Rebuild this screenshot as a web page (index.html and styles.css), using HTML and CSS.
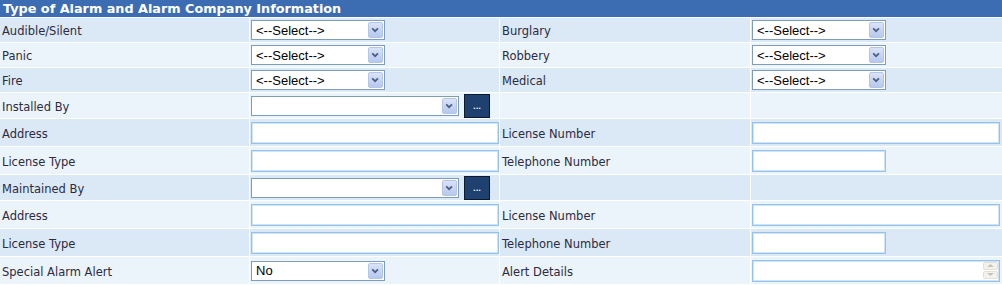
FILE: index.html
```html
<!DOCTYPE html>
<html lang="en">
<head>
  <meta charset="UTF-8">
  <title>Alarm Information</title>
  <link rel="stylesheet" href="styles.css">
</head>
<body>

  <div class="panel">
    <div class="panel-title">Type of Alarm and Alarm Company Information</div>

    <div class="rows">
      <div class="row row-select dark">
        <div class="cell label">Audible/Silent</div>
        <div class="cell"><span class="dd dd-small"><select><option>&lt;--Select--&gt;</option></select><svg class="dd-arrow" width="15" height="17" viewBox="0 0 15 17"><path d="M3.5 6.5 L7 10 L10.5 6.5" fill="none" stroke="#4d6185" stroke-width="2.2"/></svg></span></div>
        <div class="cell label">Burglary</div>
        <div class="cell"><span class="dd dd-small"><select><option>&lt;--Select--&gt;</option></select><svg class="dd-arrow" width="15" height="17" viewBox="0 0 15 17"><path d="M3.5 6.5 L7 10 L10.5 6.5" fill="none" stroke="#4d6185" stroke-width="2.2"/></svg></span></div>
      </div>

      <div class="row row-select light">
        <div class="cell label">Panic</div>
        <div class="cell"><span class="dd dd-small"><select><option>&lt;--Select--&gt;</option></select><svg class="dd-arrow" width="15" height="17" viewBox="0 0 15 17"><path d="M3.5 6.5 L7 10 L10.5 6.5" fill="none" stroke="#4d6185" stroke-width="2.2"/></svg></span></div>
        <div class="cell label">Robbery</div>
        <div class="cell"><span class="dd dd-small"><select><option>&lt;--Select--&gt;</option></select><svg class="dd-arrow" width="15" height="17" viewBox="0 0 15 17"><path d="M3.5 6.5 L7 10 L10.5 6.5" fill="none" stroke="#4d6185" stroke-width="2.2"/></svg></span></div>
      </div>

      <div class="row row-select dark">
        <div class="cell label">Fire</div>
        <div class="cell"><span class="dd dd-small"><select><option>&lt;--Select--&gt;</option></select><svg class="dd-arrow" width="15" height="17" viewBox="0 0 15 17"><path d="M3.5 6.5 L7 10 L10.5 6.5" fill="none" stroke="#4d6185" stroke-width="2.2"/></svg></span></div>
        <div class="cell label">Medical</div>
        <div class="cell"><span class="dd dd-small"><select><option>&lt;--Select--&gt;</option></select><svg class="dd-arrow" width="15" height="17" viewBox="0 0 15 17"><path d="M3.5 6.5 L7 10 L10.5 6.5" fill="none" stroke="#4d6185" stroke-width="2.2"/></svg></span></div>
      </div>

      <div class="row row-lookup light">
        <div class="cell label">Installed By</div>
        <div class="cell lookup">
          <span class="dd dd-wide"><select><option></option></select><svg class="dd-arrow" width="15" height="17" viewBox="0 0 15 17"><path d="M3.5 6.5 L7 10 L10.5 6.5" fill="none" stroke="#4d6185" stroke-width="2.2"/></svg></span>
          <button class="btn-more">...</button>
        </div>
        <div class="cell label"></div>
        <div class="cell"></div>
      </div>

      <div class="row row-text dark">
        <div class="cell label">Address</div>
        <div class="cell"><input type="text" class="txt txt-full"></div>
        <div class="cell label">License Number</div>
        <div class="cell"><input type="text" class="txt txt-full"></div>
      </div>

      <div class="row row-text light">
        <div class="cell label">License Type</div>
        <div class="cell"><input type="text" class="txt txt-full"></div>
        <div class="cell label">Telephone Number</div>
        <div class="cell"><input type="text" class="txt txt-short"></div>
      </div>

      <div class="row row-lookup dark">
        <div class="cell label">Maintained By</div>
        <div class="cell lookup">
          <span class="dd dd-wide"><select><option></option></select><svg class="dd-arrow" width="15" height="17" viewBox="0 0 15 17"><path d="M3.5 6.5 L7 10 L10.5 6.5" fill="none" stroke="#4d6185" stroke-width="2.2"/></svg></span>
          <button class="btn-more">...</button>
        </div>
        <div class="cell label"></div>
        <div class="cell"></div>
      </div>

      <div class="row row-text light">
        <div class="cell label">Address</div>
        <div class="cell"><input type="text" class="txt txt-full"></div>
        <div class="cell label">License Number</div>
        <div class="cell"><input type="text" class="txt txt-full"></div>
      </div>

      <div class="row row-text dark">
        <div class="cell label">License Type</div>
        <div class="cell"><input type="text" class="txt txt-full"></div>
        <div class="cell label">Telephone Number</div>
        <div class="cell"><input type="text" class="txt txt-short"></div>
      </div>

      <div class="row row-text light">
        <div class="cell label">Special Alarm Alert</div>
        <div class="cell"><span class="dd dd-small"><select><option>No</option></select><svg class="dd-arrow" width="15" height="17" viewBox="0 0 15 17"><path d="M3.5 6.5 L7 10 L10.5 6.5" fill="none" stroke="#4d6185" stroke-width="2.2"/></svg></span></div>
        <div class="cell label">Alert Details</div>
        <div class="cell">
          <span class="memo">
            <textarea class="txt txt-full memo-box" rows="1"></textarea>
            <span class="memo-scroll">
              <span class="memo-btn"><svg width="9" height="5" viewBox="0 0 9 5"><path d="M1 4 L4.5 1 L8 4 Z" fill="#c6c5bc"/></svg></span>
              <span class="memo-btn"><svg width="9" height="5" viewBox="0 0 9 5"><path d="M1 1 L4.5 4 L8 1 Z" fill="#c6c5bc"/></svg></span>
            </span>
          </span>
        </div>
      </div>
    </div>
  </div>

</body>
</html>
```

FILE: styles.css
```css
body {
  margin: 0;
  background-color: #fff;
  font-family: 'DejaVu Sans', Verdana, sans-serif;
  font-size: 11.5px;
  color: #2d2b42;
}

.panel-title {
  height: 17px;
  line-height: 17px;
  padding-left: 3px;
  background-color: #3c6db3;
  color: #fff;
  font-weight: bold;
  font-size: 12.8px;
}

.rows {
  display: flex;
  flex-direction: column;
  gap: 1px;
  padding-top: 1px;
  background-color: #fff;
}

.row {
  display: grid;
  grid-template-columns: 249px 249px 250px 251px;
  gap: 1px;
}

.row-select { height: 24px; }
.row-lookup { height: 25px; }
.row-text { height: 27px; }

.dark .cell { background-color: #dbe8f6; }
.light .cell { background-color: #ebf3fb; }

.cell {
  display: flex;
  align-items: center;
  padding-left: 1px;
}

.cell.label {
  padding-left: 2px;
  padding-top: 2px;
  box-sizing: border-box;
}

.lookup {
  gap: 5px;
}

/* dropdowns */
.dd {
  position: relative;
  display: inline-block;
  height: 20px;
}

.dd select {
  appearance: none;
  -webkit-appearance: none;
  height: 20px;
  width: 100%;
  margin: 0;
  padding: 0 0 0 4px;
  border: 1px solid #7f9db9;
  border-radius: 0;
  background-color: #fff;
  font-family: 'Liberation Sans', Arial, sans-serif;
  font-size: 13px;
  color: #000;
}

.dd-small { width: 134px; }
.dd-wide { width: 208px; }

.dd-arrow {
  position: absolute;
  top: 2px;
  right: 2px;
  width: 15px;
  height: 16px;
  box-sizing: border-box;
  border: 1px solid #b4c5ea;
  border-radius: 2px;
  background: linear-gradient(#dae3f7, #b6c8ee);
  pointer-events: none;
}

.btn-more {
  width: 26px;
  height: 24px;
  margin: 0;
  padding: 4px 0 0;
  border: 1px solid #0b1a2e;
  background-color: #1f4170;
  color: #fff;
  font-family: 'DejaVu Sans', Verdana, sans-serif;
  font-size: 7px;
  font-weight: bold;
  line-height: 1;
  display: flex;
  align-items: center;
  justify-content: center;
}

/* text boxes */
.txt {
  box-sizing: border-box;
  height: 22px;
  margin: 0;
  padding: 1px 3px;
  border: 1px solid #94c2ea;
  box-shadow: inset 0 0 0 1px #cfe4f7;
  background-color: #fff;
  font-family: 'Liberation Sans', Arial, sans-serif;
  font-size: 13px;
}

.txt-full { width: 248px; }
.txt-short { width: 134px; }

.memo {
  position: relative;
  display: inline-block;
  height: 22px;
}

.memo-box {
  display: block;
  resize: none;
  overflow: hidden;
}

.memo-scroll {
  position: absolute;
  top: 2px;
  right: 2px;
  display: flex;
  flex-direction: column;
  gap: 1px;
}

.memo-btn {
  width: 15px;
  height: 8px;
  box-sizing: border-box;
  border: 1px solid #e2e0d6;
  border-radius: 2px;
  background-color: #f3f2ec;
  display: flex;
  align-items: center;
  justify-content: center;
}
```
